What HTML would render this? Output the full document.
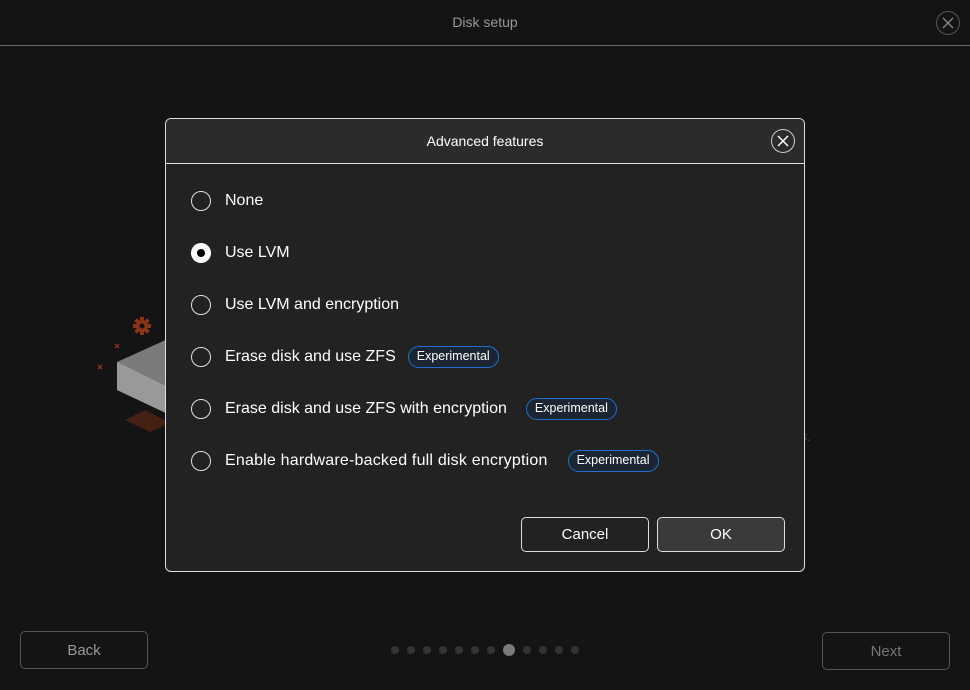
<!DOCTYPE html>
<html><head><style>
*{margin:0;padding:0;box-sizing:border-box}
body{width:970px;height:690px;background:#141414;font-family:"Liberation Sans","DejaVu Sans",sans-serif;color:#fff;position:relative;overflow:hidden}
.abs{position:absolute}
.title{left:0;width:970px;top:14px;text-align:center;font-size:14px;color:#999}
.hline{left:0;width:970px;top:45px;height:1px;background:#6a6a6a}
.xbtn{border-radius:50%;display:flex;align-items:center;justify-content:center}
.dlg{left:165px;top:118px;width:640px;height:454px;border:1px solid #ddd;border-radius:6px;background:#222;overflow:hidden}
.dh{left:0;top:0;width:638px;height:45px;background:#2b2b2b;border-bottom:1px solid #ddd}
.dh span{position:absolute;left:0;width:638px;top:14px;text-align:center;font-size:14px}
.row{left:25px;height:22px;display:flex;align-items:center;font-size:16px}
.rad{width:20px;height:20px;border:1.5px solid #ddd;border-radius:50%;margin-right:14px;flex:none}
.sel{border:none;background:#fff;display:flex;align-items:center;justify-content:center}
.sel:after{content:"";width:8px;height:8px;background:#000;border-radius:50%}
.badge{margin-left:19px;height:22px;padding:0 8px;border:1.5px solid #1f6fd0;border-radius:11px;background:#1c2633;font-size:12.5px;line-height:19px}
.btn{height:35px;border:1px solid #ddd;border-radius:5px;display:flex;align-items:center;justify-content:center;font-size:15px}
.nbtn{height:38px;border:1px solid #555;border-radius:5px;display:flex;align-items:center;justify-content:center;font-size:15px;color:#777}
.dot{width:8px;height:8px;border-radius:50%;background:#333;top:646px}
</style></head><body>
<div class="abs title">Disk setup</div>
<div class="abs hline"></div>
<div class="abs xbtn" style="left:936px;top:11px;width:24px;height:24px;border:1px solid #555">
<svg width="12" height="12" viewBox="0 0 12 12"><path d="M1 1L11 11M11 1L1 11" stroke="#888" stroke-width="1.3"/></svg></div>

<svg class="abs" style="left:95px;top:310px" width="120" height="125" viewBox="0 0 120 125">
<g fill="#8a3418"><circle cx="47" cy="16" r="6"/><rect x="45" y="7" width="4" height="18"/><rect x="38" y="14" width="18" height="4"/><rect x="45" y="7" width="4" height="18" transform="rotate(45 47 16)"/><rect x="45" y="7" width="4" height="18" transform="rotate(-45 47 16)"/></g>
<circle cx="47" cy="16" r="2.5" fill="#141414"/>
<path d="M20 34l4 4M24 34l-4 4M3 55l4 4M7 55l-4 4" stroke="#8a3418" stroke-width="1.3"/>
<path d="M22 52L75 28L75 90L22 80Z" fill="#7a7a7a"/>
<path d="M22 52L22 80L75 105L75 78Z" fill="#999"/>
<path d="M30 110L50 100L75 113L55 122Z" fill="#5a2614" opacity="0.7"/>
</svg>
<div class="abs" style="left:800px;top:428px;font-size:14px;color:#444">s.</div>

<div class="abs dlg">
<div class="abs dh"><span>Advanced features</span>
<div class="abs xbtn" style="left:605px;top:10px;width:24px;height:24px;border:1.5px solid #ccc">
<svg width="12" height="12" viewBox="0 0 12 12"><path d="M1 1L11 11M11 1L1 11" stroke="#fff" stroke-width="1.5"/></svg></div></div>
<div class="abs row" style="top:71px"><div class="rad"></div>None</div>
<div class="abs row" style="top:123px"><div class="rad sel"></div>Use LVM</div>
<div class="abs row" style="top:175px"><div class="rad"></div>Use LVM and encryption</div>
<div class="abs row" style="top:227px"><div class="rad"></div>Erase disk and use ZFS<span class="badge" style="margin-left:12px">Experimental</span></div>
<div class="abs row" style="top:279px"><div class="rad"></div>Erase disk and use ZFS with encryption<span class="badge">Experimental</span></div>
<div class="abs row" style="top:331px"><div class="rad"></div><span style="letter-spacing:0.2px">Enable hardware-backed full disk encryption</span><span class="badge" style="margin-left:20px">Experimental</span></div>
<div class="abs btn" style="left:355px;top:398px;width:128px">Cancel</div>
<div class="abs btn" style="left:491px;top:398px;width:128px;background:#3a3a3a">OK</div>
</div>

<div class="abs nbtn" style="left:20px;top:631px;width:128px;color:#999">Back</div>
<div class="abs nbtn" style="left:822px;top:632px;width:128px">Next</div>
<div class="abs dot" style="left:391px"></div><div class="abs dot" style="left:407px"></div>
<div class="abs dot" style="left:423px"></div><div class="abs dot" style="left:439px"></div>
<div class="abs dot" style="left:455px"></div><div class="abs dot" style="left:471px"></div>
<div class="abs dot" style="left:487px"></div>
<div class="abs dot" style="left:503px;top:644px;width:12px;height:12px;background:#7a7a7a"></div>
<div class="abs dot" style="left:523px"></div><div class="abs dot" style="left:539px"></div>
<div class="abs dot" style="left:555px"></div><div class="abs dot" style="left:571px"></div>
</body></html>
